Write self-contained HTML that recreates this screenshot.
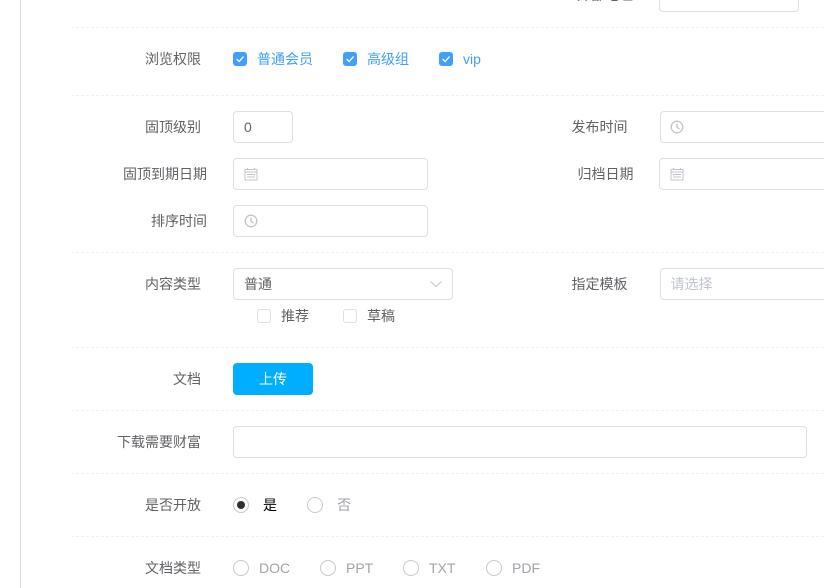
<!DOCTYPE html>
<html><head><meta charset="utf-8">
<style>
html,body{margin:0;padding:0;width:824px;height:588px;overflow:hidden;background:#fff}
body{position:relative;font-family:"Liberation Sans","WenQuanYi Zen Hei","Noto Sans CJK SC",sans-serif;font-size:14px;color:#606266}
.t{position:absolute;line-height:20px;white-space:nowrap}
.d{position:absolute;left:71px;right:0;height:1px;background:repeating-linear-gradient(90deg,#eef0f2 0,#eef0f2 3px,#fff 3px,#fff 5px)}
.i{position:absolute;box-sizing:border-box;border:1px solid #dcdfe6;border-radius:4px;background:#fff}
.c{position:absolute;box-sizing:border-box;width:14px;height:14px;border-radius:3px}
.on{background:#409eff;border:1px solid #409eff}
.off{background:#fff;border:1px solid #dcdfe6}
.b{color:#409eff}
.g{color:#a0a3a8}
.ra{position:absolute;box-sizing:border-box;width:16px;height:16px;border-radius:50%;border:1px solid #c8c9cc;background:#fff}
svg{position:absolute;display:block}
</style></head><body>
<div style="position:absolute;left:20px;top:0;width:1px;height:588px;background:#d6dee6"></div>

<div class="t" style="left:577px;top:-15px">外部地址</div>
<div class="i" style="left:659px;top:-20px;width:140px;height:32px"></div>

<div class="d" style="top:27px"></div>
<div class="t" style="left:145px;top:49px">浏览权限</div>
<div class="c on" style="left:233px;top:52px"><svg width="12" height="12" style="left:0;top:0"><path d="M2.600 6 5.100 8.500 9.600 3.400" fill="none" stroke="#fff" stroke-width="1.300"/></svg></div>
<div class="t b" style="left:257px;top:49px">普通会员</div>
<div class="c on" style="left:343px;top:52px"><svg width="12" height="12" style="left:0;top:0"><path d="M2.600 6 5.100 8.500 9.600 3.400" fill="none" stroke="#fff" stroke-width="1.300"/></svg></div>
<div class="t b" style="left:367px;top:49px">高级组</div>
<div class="c on" style="left:439px;top:52px"><svg width="12" height="12" style="left:0;top:0"><path d="M2.600 6 5.100 8.500 9.600 3.400" fill="none" stroke="#fff" stroke-width="1.300"/></svg></div>
<div class="t b" style="left:463px;top:49px">vip</div>

<div class="d" style="top:95px"></div>
<div class="t" style="left:145px;top:117px">固顶级别</div>
<div class="i" style="left:233px;top:111px;width:60px;height:32px"></div>
<div class="t" style="left:244px;top:117px">0</div>
<div class="t" style="left:571.500px;top:117px">发布时间</div>
<div class="i" style="left:660px;top:111px;width:180px;height:32px"></div>
<svg width="14" height="14" style="left:670px;top:120px" viewBox="0 0 14 14"><circle cx="7" cy="7" r="5.800" fill="none" stroke="#c0c4cc" stroke-width="1.300"/><path d="M7 3.500V7.400L9.600 9" fill="none" stroke="#c0c4cc" stroke-width="1.300"/></svg>

<div class="t" style="left:123px;top:164px">固顶到期日期</div>
<div class="i" style="left:233px;top:158px;width:195px;height:32px"></div>
<svg width="14" height="14" style="left:244px;top:167px" viewBox="0 0 14 14"><path d="M1 2.500H13V13H1ZM1 5H13M3.500 1V3M10.500 1V3" fill="none" stroke="#c0c4cc"/><path d="M3 7.500H11M3 10H11" stroke="#c0c4cc"/></svg>
<div class="t" style="left:577.500px;top:164px">归档日期</div>
<div class="i" style="left:659px;top:158px;width:180px;height:32px"></div>
<svg width="14" height="14" style="left:670px;top:167px" viewBox="0 0 14 14"><path d="M1 2.500H13V13H1ZM1 5H13M3.500 1V3M10.500 1V3" fill="none" stroke="#c0c4cc"/><path d="M3 7.500H11M3 10H11" stroke="#c0c4cc"/></svg>

<div class="t" style="left:151px;top:211px">排序时间</div>
<div class="i" style="left:233px;top:205px;width:195px;height:32px"></div>
<svg width="14" height="14" style="left:244px;top:214px" viewBox="0 0 14 14"><circle cx="7" cy="7" r="5.800" fill="none" stroke="#c0c4cc" stroke-width="1.300"/><path d="M7 3.500V7.400L9.600 9" fill="none" stroke="#c0c4cc" stroke-width="1.300"/></svg>

<div class="d" style="top:252px"></div>
<div class="t" style="left:145px;top:274px">内容类型</div>
<div class="i" style="left:233px;top:268px;width:220px;height:32px"></div>
<div class="t" style="left:244px;top:274px">普通</div>
<svg width="14" height="8" style="left:429px;top:280px" viewBox="0 0 14 8"><path d="M1.500 1.500 7 6.500 12.500 1.500" fill="none" stroke="#c0c4cc" stroke-width="1"/></svg>
<div class="t" style="left:571.500px;top:274px">指定模板</div>
<div class="i" style="left:660px;top:268px;width:180px;height:32px"></div>
<div class="t" style="left:670.500px;top:274px;color:#c0c4cc">请选择</div>
<div class="c off" style="left:257px;top:309px"></div>
<div class="t" style="left:281px;top:306px">推荐</div>
<div class="c off" style="left:343px;top:309px"></div>
<div class="t" style="left:367px;top:306px">草稿</div>

<div class="d" style="top:347px"></div>
<div class="t" style="left:173px;top:369px">文档</div>
<div style="position:absolute;left:233px;top:363px;width:80px;height:32px;background:#00aeff;border-radius:4px;color:#fff;text-align:center;line-height:32px">上传</div>

<div class="d" style="top:410px"></div>
<div class="t" style="left:117px;top:432px">下载需要财富</div>
<div class="i" style="left:233px;top:426px;width:574px;height:32px"></div>

<div class="d" style="top:473px"></div>
<div class="t" style="left:145px;top:495px">是否开放</div>
<div class="ra" style="left:233px;top:497px"><div style="position:absolute;left:3px;top:3px;width:8px;height:8px;border-radius:50%;background:#303133"></div></div>
<div class="t" style="left:263px;top:495px;color:#000">是</div>
<div class="ra" style="left:307px;top:497px"></div>
<div class="t g" style="left:337px;top:495px">否</div>

<div class="d" style="top:536px"></div>
<div class="t" style="left:145px;top:558px">文档类型</div>
<div class="ra" style="left:233px;top:560px"></div>
<div class="t g" style="left:259px;top:558px">DOC</div>
<div class="ra" style="left:320px;top:560px"></div>
<div class="t g" style="left:346px;top:558px">PPT</div>
<div class="ra" style="left:403px;top:560px"></div>
<div class="t g" style="left:429px;top:558px">TXT</div>
<div class="ra" style="left:486px;top:560px"></div>
<div class="t g" style="left:512px;top:558px">PDF</div>
</body></html>
